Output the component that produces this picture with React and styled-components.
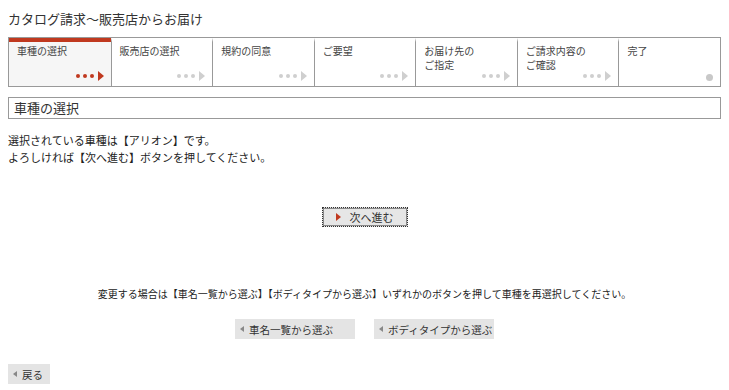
import styled, { createGlobalStyle } from "styled-components";

const Global = createGlobalStyle`
    body {
        margin: 0;
        background: #fff;
        font-family: "Noto Sans CJK JP", "Noto Sans", sans-serif;
        color: #333;
    }
`;

const Page = styled.div`
    padding: 10px 8px 0 8px;
    width: 713px;
`;

const Title = styled.h1`
    font-size: 13px;
    font-weight: normal;
    margin: 0 0 9px 0;
    line-height: 18px;
    color: #333;
`;

const Steps = styled.div`
    display: grid;
    grid-template-columns: repeat(7, 1fr);
    border: 1px solid #999;
    height: 48px;
`;

const Step = styled.div`
    position: relative;
    border-left: ${(p) => (p.$first ? "none" : "1px solid #999")};
    border-top: 4px solid ${(p) => (p.$active ? "#c0391f" : "transparent")};
    background: ${(p) => (p.$active ? "#f6f6f6" : "#fff")};
    padding: 2px 8px;
    font-size: 10px;
    line-height: 14px;
    color: #444;
`;

const Marker = styled.div`
    position: absolute;
    right: 7px;
    bottom: 5px;
    display: flex;
    align-items: center;
    gap: 3px;
`;

const Dot = styled.span`
    width: 4px;
    height: 4px;
    border-radius: 50%;
    background: ${(p) => p.$color};
`;

const Arrow = styled.span`
    width: 0;
    height: 0;
    margin-left: 1px;
    border-top: 5px solid transparent;
    border-bottom: 5px solid transparent;
    border-left: 6px solid ${(p) => p.$color};
`;

const EndDot = styled.span`
    width: 7px;
    height: 7px;
    border-radius: 50%;
    background: #c8c8c8;
`;

const Heading = styled.h2`
    margin: 10px 0 0 0;
    border: 1px solid #999;
    height: 20px;
    font-size: 13px;
    font-weight: normal;
    line-height: 20px;
    padding-left: 5px;
    color: #333;
`;

const Lead = styled.p`
    margin: 13px 0 0 0;
    font-size: 11px;
    line-height: 17px;
    color: #222;
`;

const Center = styled.div`
    display: flex;
    justify-content: center;
    gap: ${(p) => p.$gap || 0}px;
    margin-top: ${(p) => p.$top}px;
`;

const NextButton = styled.button`
    width: 86px;
    height: 20px;
    border: 1px dotted #333;
    outline: 1px solid #888;
    outline-offset: -2px;
    background: #e6e6e6;
    font-family: inherit;
    font-size: 11px;
    color: #333;
    display: flex;
    align-items: center;
    justify-content: center;
    gap: 9px;
    padding: 0;
`;

const Note = styled.p`
    margin: 0;
    font-size: 10px;
    line-height: 14px;
    text-align: center;
    color: #222;
`;

const GreyButton = styled.button`
    width: ${(p) => p.$w}px;
    height: 20px;
    border: none;
    background: #e4e4e4;
    font-family: inherit;
    font-size: 10.5px;
    color: #333;
    white-space: nowrap;
    display: flex;
    align-items: center;
    gap: 5px;
    padding: 0 0 0 5px;
`;

const Back = styled(GreyButton)`
    margin-top: 25px;
`;

const LeftTri = styled.span`
    width: 0;
    height: 0;
    border-top: 3px solid transparent;
    border-bottom: 3px solid transparent;
    border-right: 4px solid #888;
`;

const RightTri = styled.span`
    width: 0;
    height: 0;
    border-top: 4px solid transparent;
    border-bottom: 4px solid transparent;
    border-left: 5px solid #c0391f;
`;

const steps = [
    ["車種の選択"],
    ["販売店の選択"],
    ["規約の同意"],
    ["ご要望"],
    ["お届け先の", "ご指定"],
    ["ご請求内容の", "ご確認"],
    ["完了"],
];

const App = () => {
    return (
        <Page>
            <Global />
            <Title>カタログ請求～販売店からお届け</Title>
            <Steps>
                {steps.map((lines, i) => {
                    const active = i === 0;
                    const last = i === steps.length - 1;
                    const c = active ? "#c0391f" : "#cfcfcf";
                    return (
                        <Step key={i} $first={i === 0} $active={active}>
                            {lines.map((l, j) => (
                                <div key={j}>{l}</div>
                            ))}
                            <Marker>
                                {last ? (
                                    <EndDot />
                                ) : (
                                    <>
                                        <Dot $color={c} />
                                        <Dot $color={c} />
                                        <Dot $color={c} />
                                        <Arrow $color={c} />
                                    </>
                                )}
                            </Marker>
                        </Step>
                    );
                })}
            </Steps>
            <Heading>車種の選択</Heading>
            <Lead>
                選択されている車種は【アリオン】です。
                <br />
                よろしければ【次へ進む】ボタンを押してください。
            </Lead>
            <Center $top={41}>
                <NextButton>
                    <RightTri />
                    次へ進む
                </NextButton>
            </Center>
            <Center $top={60}>
                <Note>
                    変更する場合は【車名一覧から選ぶ】【ボディタイプから選ぶ】いずれかのボタンを押して車種を再選択してください。
                </Note>
            </Center>
            <Center $top={18} $gap={19}>
                <GreyButton $w={120}>
                    <LeftTri />
                    車名一覧から選ぶ
                </GreyButton>
                <GreyButton $w={120}>
                    <LeftTri />
                    ボディタイプから選ぶ
                </GreyButton>
            </Center>
            <Back $w={42}>
                <LeftTri />
                戻る
            </Back>
        </Page>
    );
};

export default App;
